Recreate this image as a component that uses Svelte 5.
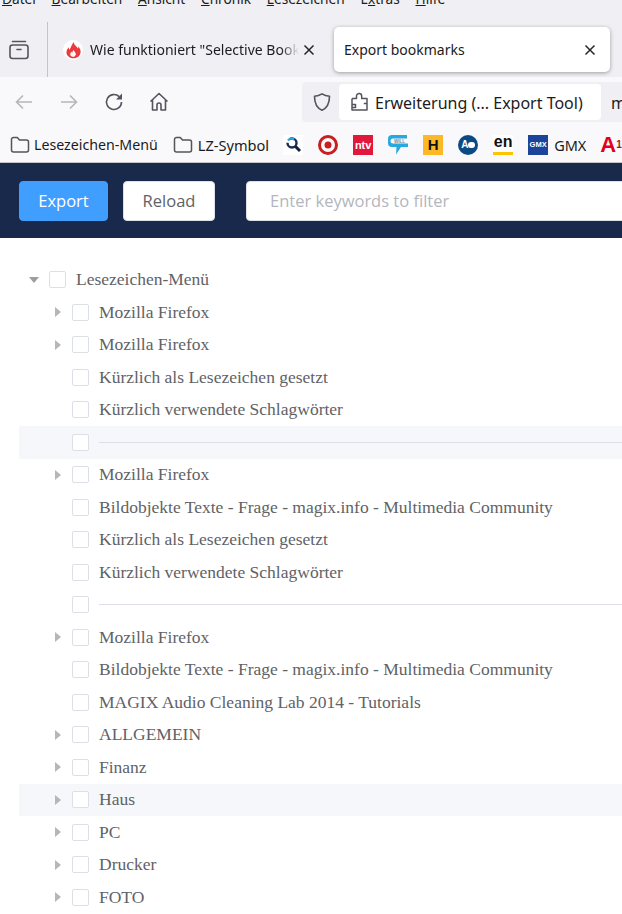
<script lang="ts">
	interface Row {
		label?: string;
		level: number;
		arrow?: 'open' | 'closed';
		separator?: boolean;
		hover?: boolean;
	}

	const menu = [
		['Datei', 'D'],
		['Bearbeiten', 'B'],
		['Ansicht', 'A'],
		['Chronik', 'C'],
		['Lesezeichen', 'L'],
		['Extras', 'x'],
		['Hilfe', 'H']
	];

	const rows: Row[] = [
		{ label: 'Lesezeichen-Menü', level: 0, arrow: 'open' },
		{ label: 'Mozilla Firefox', level: 1, arrow: 'closed' },
		{ label: 'Mozilla Firefox', level: 1, arrow: 'closed' },
		{ label: 'Kürzlich als Lesezeichen gesetzt', level: 1 },
		{ label: 'Kürzlich verwendete Schlagwörter', level: 1 },
		{ level: 1, separator: true, hover: true },
		{ label: 'Mozilla Firefox', level: 1, arrow: 'closed' },
		{ label: 'Bildobjekte Texte - Frage - magix.info - Multimedia Community', level: 1 },
		{ label: 'Kürzlich als Lesezeichen gesetzt', level: 1 },
		{ label: 'Kürzlich verwendete Schlagwörter', level: 1 },
		{ level: 1, separator: true },
		{ label: 'Mozilla Firefox', level: 1, arrow: 'closed' },
		{ label: 'Bildobjekte Texte - Frage - magix.info - Multimedia Community', level: 1 },
		{ label: 'MAGIX Audio Cleaning Lab 2014 - Tutorials', level: 1 },
		{ label: 'ALLGEMEIN', level: 1, arrow: 'closed' },
		{ label: 'Finanz', level: 1, arrow: 'closed' },
		{ label: 'Haus', level: 1, arrow: 'closed', hover: true },
		{ label: 'PC', level: 1, arrow: 'closed' },
		{ label: 'Drucker', level: 1, arrow: 'closed' },
		{ label: 'FOTO', level: 1, arrow: 'closed' }
	];
</script>

<div class="window">
	<nav class="menubar">
		{#each menu as [name, key]}
			{@const at = name.indexOf(key)}
			<span>{name.slice(0, at)}<u>{key}</u>{name.slice(at + 1)}</span>
		{/each}
	</nav>

	<div class="tabstrip">
		<div class="tab-manager">
			<svg width="20" height="20" viewBox="0 0 20 20" fill="none" stroke="#55545c" stroke-width="1.6">
				<path d="M3.500 1.500h13" stroke-linecap="round" />
				<rect x="1" y="5" width="18" height="13.500" rx="2.500" />
				<path d="M8 9.500h4" stroke-linecap="round" />
			</svg>
		</div>
		<div class="tab">
			<svg class="favicon" width="20" height="20" viewBox="0 0 20 20">
				<circle cx="10" cy="10" r="10" fill="#fff" />
				<path d="M10.500 2c.5 3 3 4 4.300 6.500.4-.7.500-1.300.4-2 1.800 2 2.800 4 2.300 6.500-.5 3-3 5-6.500 5.200-3.800.2-7-2-7.500-5.300-.3-2.400.9-4.100 2.200-5.600 0 1 .2 1.800.8 2.400C7.500 8 8.800 5 10.500 2z" fill="#ed3a3f" />
				<path d="M10.500 10c.5 1.500 2.300 2.200 2.300 4.200 0 1.500-1.200 2.600-2.800 2.600s-2.800-1-2.800-2.500c0-1.200.7-2 1.500-2.600.1.500.3.800.6 1 .1-1 .5-1.900 1.200-2.700z" fill="#fff" />
			</svg>
			<span class="tab-title">Wie funktioniert "Selective Bookmarks</span>
			<span class="close">
				<svg width="12" height="12" viewBox="0 0 12 12" stroke="#26252b" stroke-width="1.500"><path d="M1.500 1.500l9 9M10.500 1.500l-9 9" /></svg>
			</span>
		</div>
		<div class="tab active">
			<span class="tab-title">Export bookmarks</span>
			<span class="close">
				<svg width="12" height="12" viewBox="0 0 12 12" stroke="#26252b" stroke-width="1.500"><path d="M1.500 1.500l9 9M10.500 1.500l-9 9" /></svg>
			</span>
		</div>
	</div>

	<div class="toolbar">
		<div class="nav-icons">
			<svg width="20" height="20" viewBox="0 0 20 20" fill="none" stroke="#b6b5bb" stroke-width="1.600"><path d="M18 10H2.500M9 3.500L2.500 10 9 16.500" /></svg>
			<svg width="20" height="20" viewBox="0 0 20 20" fill="none" stroke="#b6b5bb" stroke-width="1.600"><path d="M2 10h15.500M11 3.500l6.500 6.500-6.500 6.500" /></svg>
			<svg width="20" height="20" viewBox="0 0 20 20" fill="none" stroke="#55545c" stroke-width="1.600"><path d="M17.500 10a7.500 7.500 0 1 1-2.300-5.400" /><path d="M18 1.500v6h-6z" fill="#55545c" stroke="none" /></svg>
			<svg width="20" height="20" viewBox="0 0 20 20" fill="none" stroke="#55545c" stroke-width="1.600"><path d="M1.500 9.500L10 1.500l8.500 8M3.500 8v10h4.500v-5a2 2 0 0 1 4 0v5h4.500V8" stroke-linejoin="round" /></svg>
		</div>
		<div class="urlbar">
			<svg class="shield" width="20" height="20" viewBox="0 0 20 20" fill="none" stroke="#55545c" stroke-width="1.600"><path d="M10 1.800c2.200 1.500 4.500 2.200 7.500 2.400 0 6.500-1.800 11.500-7.500 14-5.700-2.500-7.500-7.500-7.500-14 3-.2 5.300-.9 7.500-2.400z" stroke-linejoin="round" /></svg>
			<div class="identity">
				<svg width="18" height="20" viewBox="0 0 18 20" fill="none" stroke="#55545c" stroke-width="1.500"><path d="M1 6.500h4.500V4a2.600 2.600 0 0 1 5.200 0v2.500H16v5h-3.200M1 12.500h3.500v3H1zM16 11.500V18H1v-2.500M1 6.500v6" stroke-linejoin="round" /></svg>
				<span>Erweiterung (... Export Tool)</span>
			</div>
			<span class="url-rest">moz-extension://</span>
		</div>
	</div>

	<div class="bookmarks">
		<span class="bm">
			<svg width="20" height="18" viewBox="0 0 20 18" fill="none" stroke="#55545c" stroke-width="1.500"><path d="M1.500 14V3.500a2 2 0 0 1 2-2h3.800l2.200 2.500h7a2 2 0 0 1 2 2V14a2 2 0 0 1-2 2h-13a2 2 0 0 1-2-2z" stroke-linejoin="round" /></svg>
			Lesezeichen-Menü
		</span>
		<span class="bm">
			<svg width="20" height="18" viewBox="0 0 20 18" fill="none" stroke="#55545c" stroke-width="1.500"><path d="M1.500 14V3.500a2 2 0 0 1 2-2h3.800l2.200 2.500h7a2 2 0 0 1 2 2V14a2 2 0 0 1-2 2h-13a2 2 0 0 1-2-2z" stroke-linejoin="round" /></svg>
			<span class="lz">LZ-Symbol</span>
		</span>
		<div class="favs">
			<svg width="20" height="20" viewBox="0 0 20 20" fill="none"><rect width="20" height="20" fill="#fff" /><circle cx="9" cy="8" r="4.500" stroke="#1a2c55" stroke-width="2.400" stroke-dasharray="14 4" /><path d="M12.500 11.500l4.500 4.500" stroke="#12203d" stroke-width="3" /><path d="M5 5.500a4.500 4.500 0 0 1 6-1" stroke="#2aa7e0" stroke-width="2.400" /></svg>
			<svg width="20" height="20" viewBox="0 0 20 20" fill="none"><circle cx="10" cy="10" r="8.500" stroke="#c8201f" stroke-width="3" /><circle cx="10" cy="10" r="3.500" fill="#c8201f" /></svg>
			<span class="logo ntv">ntv</span>
			<span class="will">
				<svg width="20" height="20" viewBox="0 0 20 20">
					<path d="M4 0h15v3.500H5a2.500 2.500 0 0 0 0 5h15V12h-7l-5 7.500 .5-7.500H4a4 4 0 0 1-4-4V4a4 4 0 0 1 4-4z" fill="#25a9e0" />
					<text x="11.500" y="7.500" text-anchor="middle" font-size="4.500" font-weight="700" font-family="Liberation Sans, sans-serif" fill="#6a8fa8">WILL</text>
				</svg>
			</span>
			<span class="logo hotel">H</span>
			<span class="logo round">A</span>
			<span class="logo en">en</span>
			<span class="logo gmx">GMX</span>
			<span class="gmx-label">GMX</span>
			<span class="logo a1">A<sup>1</sup></span>
		</div>
	</div>

	<header class="app-header">
		<button class="btn primary">Export</button>
		<button class="btn">Reload</button>
		<input class="filter" placeholder="Enter keywords to filter" />
	</header>

	<main class="tree">
		{#each rows as row}
			<div class="row level-{row.level}" class:hover={row.hover}>
				<span class="arrow {row.arrow ?? ''}"></span>
				<span class="check"></span>
				{#if row.separator}
					<span class="sep"></span>
				{:else}
					<span class="label">{row.label}</span>
				{/if}
			</div>
		{/each}
	</main>
</div>

<style>
	:global(body) {
		overflow: hidden;
		background: #fff;
	}

	.window {
		width: 622px;
		height: 914px;
		overflow: hidden;
		font-family: "Noto Sans", "Open Sans", sans-serif;
		color: #1c1b22;
	}

	.menubar {
		height: 10px;
		background: #f0f0f4;
		display: flex;
		align-items: flex-end;
		gap: 15.700px;
		padding-left: 2px;
		font-size: 13.700px;
		line-height: 16px;
		overflow: hidden;
		white-space: nowrap;
	}

	.menubar span {
		flex: none;
		position: relative;
		top: -3px;
	}

	.tabstrip {
		height: 67px;
		background: #f0f0f4;
		display: flex;
		align-items: center;
	}

	.tab-manager {
		flex: none;
		width: 48px;
		height: 55px;
		margin-top: 12px;
		border-right: 1px solid #c4c3c9;
		display: flex;
		align-items: center;
		padding-left: 9px;
		box-sizing: border-box;
	}

	.tab {
		flex: none;
		box-sizing: border-box;
		display: flex;
		align-items: center;
		height: 45px;
		margin-top: 12px;
		font-size: 14px;
	}

	.tab:not(.active) {
		width: 286px;
		padding: 0 19px 0 15px;
	}

	.favicon {
		flex: none;
		margin-right: 7px;
	}

	.tab-title {
		flex: 1;
		min-width: 0;
		overflow: hidden;
		white-space: nowrap;
		mask-image: linear-gradient(to left, transparent 0, #000 18px);
	}

	.tab.active .tab-title {
		mask-image: none;
	}

	.close {
		flex: none;
		width: 12px;
		height: 12px;
		display: flex;
		margin-left: 4px;
	}

	.tab.active {
		width: 276px;
		padding: 0 14px 0 10px;
		background: #fff;
		border-radius: 5px;
		box-shadow: 0 1px 4px rgba(0, 0, 0, 0.35);
	}

	.toolbar {
		height: 45px;
		background: #f9f9fb;
		display: flex;
		align-items: center;
		padding-left: 14px;
		box-sizing: border-box;
		padding-top: 5px;
	}

	.nav-icons {
		flex: none;
		width: 288px;
		display: flex;
		gap: 25px;
	}

	.urlbar {
		flex: none;
		height: 40px;
		width: 340px;
		background: #f0f0f4;
		border-radius: 4px 0 0 4px;
		display: flex;
		align-items: center;
		white-space: nowrap;
		overflow: hidden;
	}

	.shield {
		flex: none;
		margin: 0 7px 0 10px;
	}

	.identity {
		flex: none;
		width: 262px;
		height: 36px;
		box-sizing: border-box;
		background: #fff;
		border-radius: 4px;
		display: flex;
		align-items: center;
		gap: 6px;
		padding-left: 12px;
		font-size: 16px;
	}

	.identity span,
	.url-rest {
		position: relative;
		top: 1px;
	}

	.url-rest {
		margin-left: 10px;
		font-size: 16px;
	}

	.bookmarks {
		height: 35px;
		padding: 5px 0 0 10px;
		background: #f9f9fb;
		border-bottom: 1px solid #c5c5c8;
		display: flex;
		align-items: center;
		font-size: 14.200px;
		white-space: nowrap;
	}

	.bm {
		flex: none;
		display: flex;
		align-items: center;
		gap: 4px;
		margin-right: 15px;
	}

	.bm + .bm {
		margin-right: 14px;
		gap: 5px;
	}

	.lz {
		font-size: 14.600px;
	}

	.favs {
		flex: none;
		display: flex;
		align-items: center;
		gap: 15px;
	}

	.will {
		flex: none;
		width: 20px;
		height: 20px;
	}

	.logo {
		flex: none;
		width: 20px;
		height: 20px;
		display: flex;
		align-items: center;
		justify-content: center;
		font-family: "Liberation Sans", sans-serif;
		font-weight: 700;
	}

	.ntv {
		background: #e2173c;
		color: #fff;
		font-size: 11px;
	}

	.hotel {
		background: #fcb827;
		color: #111;
		font-size: 15px;
	}

	.round {
		position: relative;
		background: #0c4a86;
		color: #fff;
		border-radius: 50%;
		font-size: 10px;
		justify-content: flex-start;
		padding-left: 3px;
		box-sizing: border-box;
	}

	.round::after {
		content: "";
		position: absolute;
		right: 3px;
		top: 7px;
		width: 7px;
		height: 6px;
		border-radius: 3px;
		background: #fff;
	}

	.en {
		background: #fff;
		color: #111;
		font-size: 16px;
		box-shadow: inset 0 -3px 0 #fdc400;
		padding-bottom: 5px;
		box-sizing: border-box;
	}

	.gmx {
		background: #1c449b;
		color: #fff;
		font-size: 7.500px;
	}

	.gmx-label {
		flex: none;
		margin-left: -9px;
		margin-right: -1px;
		font-size: 14.500px;
	}

	.a1 {
		color: #e2001a;
		font-size: 22px;
		font-weight: 700;
		width: auto;
	}

	.a1 sup {
		font-size: 10px;
		color: #9a1b1f;
		line-height: 1;
	}

	.app-header {
		height: 75px;
		background: #18294b;
		display: flex;
		align-items: center;
		gap: 15px;
		padding-left: 19px;
		font-family: "Open Sans", "Noto Sans", sans-serif;
	}

	.btn {
		flex: none;
		box-sizing: border-box;
		width: 92px;
		height: 40px;
		border: 1px solid #dcdfe6;
		border-radius: 4px;
		background: #fff;
		color: #606266;
		font: inherit;
		font-size: 16.500px;
		padding: 0;
	}

	.btn.primary {
		width: 89px;
		background: #409eff;
		border-color: #409eff;
		color: #fff;
	}

	.filter {
		flex: none;
		box-sizing: border-box;
		width: 420px;
		height: 40px;
		margin-left: 16px;
		border: 1px solid #dcdfe6;
		border-radius: 4px;
		background: #fff;
		padding: 0 23px;
		font: inherit;
		font-size: 16.500px;
		color: #606266;
	}

	.filter::placeholder {
		color: #b3b6bd;
		opacity: 1;
	}

	.tree {
		padding: 25.500px 0 0 19px;
		font-family: "Liberation Serif", serif;
		font-size: 17.500px;
		color: #606266;
	}

	.row {
		height: 32.500px;
		display: flex;
		align-items: center;
		white-space: nowrap;
	}

	.row.hover {
		background: #f5f7fa;
	}

	.level-0 {
		padding-left: 12px;
	}

	.level-1 {
		padding-left: 35px;
	}

	.arrow {
		flex: none;
		width: 12px;
		height: 12px;
		margin-right: 6px;
		position: relative;
	}

	.arrow.closed::before,
	.arrow.open::before {
		content: "";
		position: absolute;
		border-style: solid;
		border-color: transparent;
	}

	.arrow.closed::before {
		left: 1px;
		top: 1px;
		border-width: 5px 0 5px 6px;
		border-left-color: #b4b6ba;
	}

	.arrow.open::before {
		left: -2px;
		top: 3px;
		border-width: 6px 5px 0 5px;
		border-top-color: #9b9da2;
	}

	.check {
		flex: none;
		box-sizing: border-box;
		width: 17px;
		height: 17px;
		border: 1px solid #dcdfe6;
		border-radius: 2px;
		background: #fff;
		margin-right: 10px;
	}

	.sep {
		flex: 1;
		height: 1px;
		background: #dcdfe6;
	}
</style>
